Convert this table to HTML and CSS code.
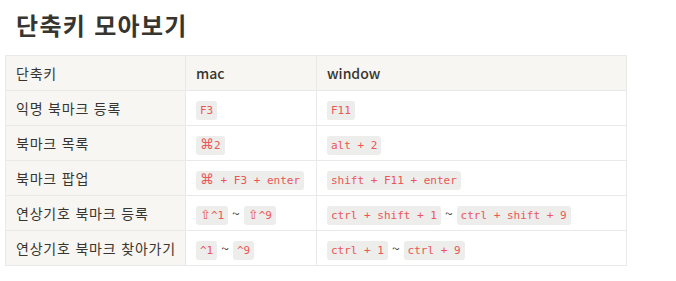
FILE: index.html
```html
<!DOCTYPE html>
<html lang="ko">
<head>
<meta charset="utf-8">
<link rel="stylesheet" href="styles.css">
</head>
<body>
<h1 class="title">단축키 모아보기</h1>
<table class="shortcuts">
  <colgroup>
    <col class="c1"><col class="c2"><col class="c3">
  </colgroup>
  <tr class="head">
    <td class="ko">단축키</td>
    <td class="hb">mac</td>
    <td class="hb">window</td>
  </tr>
  <tr>
    <td class="ko">익명 북마크 등록</td>
    <td><code>F3</code></td>
    <td><code>F11</code></td>
  </tr>
  <tr>
    <td class="ko">북마크 목록</td>
    <td><code><span class="sym">⌘</span>2</code></td>
    <td><code>alt + 2</code></td>
  </tr>
  <tr>
    <td class="ko">북마크 팝업</td>
    <td><code><span class="sym">⌘</span> + F3 + enter</code></td>
    <td><code>shift + F11 + enter</code></td>
  </tr>
  <tr>
    <td class="ko">연상기호 북마크 등록</td>
    <td><code><span class="sym sh">⇧</span>^1</code> ~ <code><span class="sym sh">⇧</span>^9</code></td>
    <td><code>ctrl + shift + 1</code> ~ <code>ctrl + shift + 9</code></td>
  </tr>
  <tr>
    <td class="ko">연상기호 북마크 찾아가기</td>
    <td><code>^1</code> ~ <code>^9</code></td>
    <td><code>ctrl + 1</code> ~ <code>ctrl + 9</code></td>
  </tr>
</table>
</body>
</html>
```

FILE: styles.css
```css
html, body {
  margin: 0;
  padding: 0;
  background: #ffffff;
}
body {
  font-family: "Noto Sans CJK KR", "Noto Sans", sans-serif;
  color: #37352f;
  font-size: 14px;
}
.title {
  margin: 0;
  padding: 7px 0 0 16px;
  font-size: 24px;
  line-height: 36px;
  font-weight: 700;
  letter-spacing: 1.3px;
  height: 48px;
}
.shortcuts {
  margin-left: 5px;
  border-collapse: collapse;
  table-layout: fixed;
  width: 621px;
}
.c1 { width: 180px; }
.c2 { width: 131px; }
.c3 { width: 310px; }
.shortcuts td {
  border: 1px solid #e9e9e7;
  height: 34px;
  padding: 0 10px;
  line-height: 20px;
  vertical-align: middle;
  white-space: nowrap;
}
.shortcuts td.ko {
  letter-spacing: 0.8px;
}
.shortcuts td:first-child,
.head td {
  background: #f7f6f3;
}
.hb {
  font-weight: 500;
}
code {
  font-family: "DejaVu Sans Mono", "Liberation Mono", monospace;
  font-size: 11px;
  color: #eb5757;
  background: rgba(135, 131, 120, 0.15);
  border-radius: 3px;
  padding: 3px 4px;
  line-height: 13px;
}
.sym {
  font-family: "DejaVu Sans", sans-serif;
  font-size: 14px;
  line-height: 13px;
  display: inline-block;
  min-width: 14px;
  text-align: left;
}
.sym.sh {
  font-size: 13px;
  min-width: 0;
}
```
